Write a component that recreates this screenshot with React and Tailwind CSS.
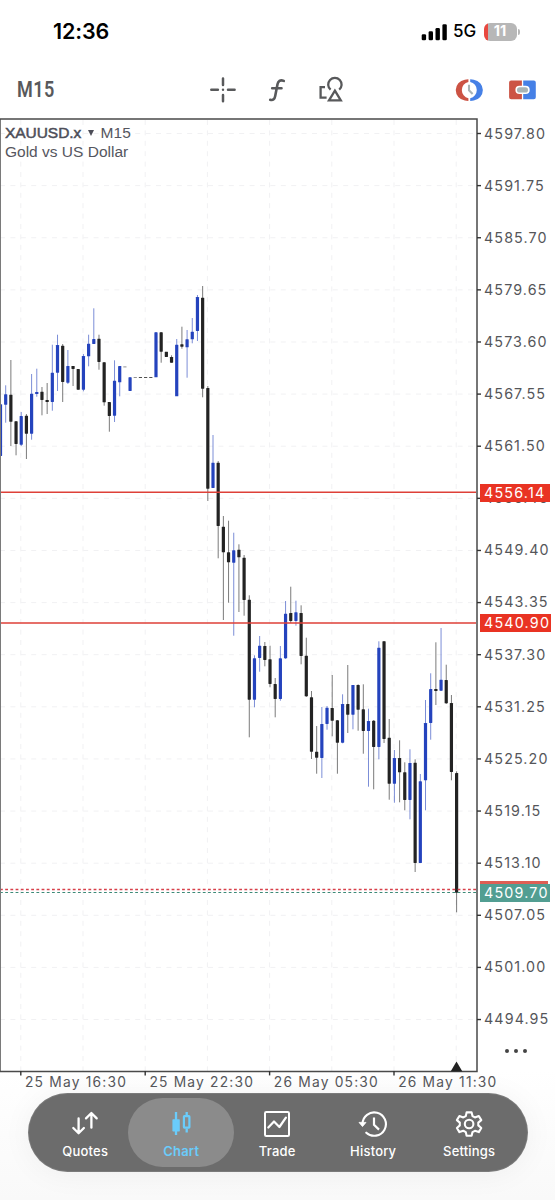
const prices = [
  "4597.80", "4591.75", "4585.70", "4579.65", "4573.60", "4567.55",
  "4561.50", "4555.45", "4549.40", "4543.35", "4537.30", "4531.25",
  "4525.20", "4519.15", "4513.10", "4507.05", "4501.00", "4494.95",
];

const times = ["25 May 16:30", "25 May 22:30", "26 May 05:30", "26 May 11:30"];

// [bullish, body top, body bottom, high, low]
const candles = [
  [1, 404.3, 456, 404, 456],
  [1, 394.3, 404.7, 385.3, 422.7],
  [0, 394.7, 421.7, 360, 446],
  [0, 421.3, 444, 421, 455.3],
  [1, 416, 444.7, 412, 446],
  [0, 415.7, 433.7, 414, 459],
  [1, 393.7, 433.7, 374, 439.7],
  [1, 392, 394, 368.7, 396.7],
  [0, 391.7, 400, 387, 415.3],
  [0, 400, 402, 383, 414],
  [1, 372.7, 402, 344.7, 410.7],
  [1, 345, 372.7, 334.7, 391],
  [0, 345.7, 382, 344, 402],
  [1, 366, 382.7, 350, 384],
  [0, 366, 369, 366, 386],
  [0, 369, 389.7, 369, 389.7],
  [1, 356, 389.7, 354, 391.3],
  [1, 343.7, 356.3, 334.7, 366.3],
  [1, 339, 344, 308.3, 344],
  [0, 338.7, 362, 334.7, 369.7],
  [0, 362.3, 402.3, 362, 405.7],
  [0, 402, 416, 402, 431.7],
  [1, 380.7, 415.7, 360.3, 422],
  [1, 366, 382.3, 366, 396.3],
  [0, 366.7, 367.2, 367, 367],
  [1, 377.3, 391, 377, 391],
  [0, 377.2, 377.7, 377, 377],
  [0, 377, 377.8, 377, 377],
  [0, 377, 377.8, 377, 377],
  [0, 377, 377.8, 377, 377],
  [1, 332.3, 377.3, 332, 377],
  [0, 332.3, 351.7, 332, 362.7],
  [0, 351.7, 357, 352, 357],
  [0, 357, 362.7, 355.3, 362.7],
  [1, 344.7, 396.3, 339, 396],
  [0, 344.3, 346.7, 326.7, 348.7],
  [1, 339.3, 347.3, 330, 377.7],
  [1, 331.7, 339.3, 318, 343.3],
  [1, 297, 331, 295, 341],
  [0, 297.7, 388.7, 286, 397.3],
  [0, 388, 488.7, 386, 501],
  [1, 462.7, 488, 435, 488],
  [0, 462.7, 526, 461, 558.3],
  [0, 526.7, 552.3, 516, 620],
  [0, 552.3, 562.3, 520.7, 602.7],
  [1, 550.3, 562.7, 532.7, 635.7],
  [0, 549.7, 557.3, 544.3, 612],
  [0, 557.7, 600, 555, 615.7],
  [0, 599.7, 699.7, 595.3, 737.3],
  [1, 658.3, 699.7, 655.3, 707.3],
  [1, 645.7, 658, 636, 671.7],
  [0, 646, 660, 642, 666.3],
  [0, 659.3, 684, 645.7, 687.3],
  [0, 684, 699, 678, 717.3],
  [1, 658.3, 699, 646, 700.7],
  [1, 613.7, 658.3, 601, 659],
  [0, 613, 621, 586.7, 623],
  [1, 612.3, 621, 600.7, 625.7],
  [0, 613, 656, 605.3, 664.3],
  [0, 655.7, 696.3, 637.7, 697],
  [0, 697.3, 751.7, 691, 759],
  [0, 751.7, 757.7, 726, 773.7],
  [1, 724, 758, 707, 778],
  [1, 707.7, 724, 706, 729.7],
  [0, 708, 720.7, 675, 736.3],
  [0, 720.3, 742.7, 720, 773.7],
  [1, 704, 742.7, 694.3, 743.3],
  [0, 704, 714.7, 665, 733],
  [1, 685, 714.7, 685, 729.3],
  [0, 685, 709.7, 684.3, 730.7],
  [0, 709.3, 731, 684.3, 753.7],
  [1, 721, 731, 708.7, 786.7],
  [0, 720.7, 747, 720, 789.3],
  [1, 647.7, 747, 641.3, 759.3],
  [0, 641.3, 739, 641, 743],
  [0, 737.7, 783.7, 719, 799.7],
  [1, 758, 783.7, 750, 802.7],
  [0, 758, 772.3, 740.3, 802.3],
  [0, 772.3, 800, 762.3, 810.3],
  [1, 763, 800, 749.3, 819.3],
  [0, 762.7, 863, 759.3, 872],
  [1, 781.3, 863, 774, 863],
  [1, 723, 780.3, 700, 810.3],
  [1, 689, 723, 673.3, 739.7],
  [0, 689, 691, 642.3, 705],
  [1, 679.7, 690.7, 628, 691],
  [0, 680, 703.3, 664.7, 704],
  [0, 703, 772, 695, 780.3],
  [0, 773, 892.7, 771.3, 912.3],
];

const candleX = (i) => 0.5 + i * 5.183;
const gridX = (i) => 20.8 + i * 62.2;
const gridY = (i) => 133.5 + i * 52.12;

function StatusBar() {
  return (
    <div className="flex h-[61px] items-center justify-between pl-[53px] pr-[36px] pt-[2px] text-black">
      <span className="text-[21.5px] font-semibold tracking-[-0.1px]">12:36</span>
      <div className="flex items-center">
        <svg width="27" height="18" viewBox="0 0 27 18">
          <rect x="0.7" y="11.3" width="4.4" height="6" rx="1.3" />
          <rect x="7.6" y="8.3" width="4.4" height="9" rx="1.3" />
          <rect x="14.5" y="5" width="4.4" height="12.3" rx="1.3" />
          <rect x="21.4" y="1.2" width="4.4" height="16.1" rx="1.3" />
        </svg>
        <span className="ml-[5px] w-[25px] text-[17px] font-medium leading-none">5G</span>
        <div className="ml-[6px] flex h-[18px] w-[33px] items-center justify-center overflow-hidden rounded-[6px] bg-[linear-gradient(90deg,#e8483f_4px,#b7b7b7_4px)]">
          <span className="pr-px text-[14.5px] font-bold leading-none text-white">11</span>
        </div>
        <div className="-mr-px ml-px h-[6px] w-[2px] rounded-r-full bg-[#b7b7b7]" />
      </div>
    </div>
  );
}

function Toolbar() {
  return (
    <div className="flex h-[57px] items-center pl-[17px] text-[#58595b]">
      <span className="w-[192px] origin-left scale-x-[0.82] font-['Roboto'] text-[22px] font-semibold leading-none tracking-[0.6px]">
        M15
      </span>
      <svg width="28" height="28" viewBox="209 75.5 28 28" fill="none" stroke="currentColor" strokeWidth="2.5" strokeLinecap="round">
        <path d="M211.300 89.300h6.600M228 89.300h6.600M223 78v6.600M223 94.600v6.200" />
        <circle cx="223" cy="89.3" r="1.2" fill="currentColor" stroke="none" />
      </svg>
      <svg className="ml-[30px]" width="20" height="28" viewBox="267 75.5 20 28" fill="none" stroke="currentColor" strokeWidth="2.6" strokeLinecap="round" strokeLinejoin="round">
        <path d="M283.8 80.4c-3.7-1.5-5.7.3-6.3 3.4l-2.3 11.6c-.6 3.1-2 4.8-5 3.9M272.2 87.7h9.3" />
      </svg>
      <svg className="ml-[30px]" width="28" height="28" viewBox="317 75.5 28 28" fill="none" stroke="currentColor" strokeWidth="2.3">
        <path d="M325 86.6h-4.4v10.6h6" />
        <path d="M330.6 89.2a6.7 6.7 0 1 1 8.6 0" />
        <path d="M334.9 90.2l5.9 9.700h-11.800z" />
      </svg>
      <svg className="ml-[110px]" width="28" height="28" viewBox="455 75.5 28 28">
        <path d="M468.4 78.8a14 14 0 0 0-3.6.4a10.5 10.5 0 0 0 0 20.8a14 14 0 0 0 3.6.4v-2.6a8.4 8.4 0 0 1 0-16.4z" fill="#cc5344" />
        <path d="M470.2 78.8a14 14 0 0 1 3.6.4a10.5 10.5 0 0 1 0 20.8a14 14 0 0 1-3.6.4v-2.600a8.400 8.400 0 0 0 0-16.400z" fill="#4680e6" />
        <path d="M469 84.3v5.5l3.600 3.600" fill="none" stroke="#a9b4b6" strokeWidth="2.1" />
      </svg>
      <svg className="ml-[25px]" width="28" height="28" viewBox="508 75.5 28 28">
        <path d="M521.9 80h-10.8a2 2 0 0 0-2 2v14.800a2 2 0 0 0 2 2h10.800v-5.300h-2.400a4 4 0 0 1 0-8.200h2.400z" fill="#cc5344" />
        <path d="M523.200 80h10.600a2 2 0 0 1 2 2v14.800a2 2 0 0 1-2 2h-10.600v-5.300h2.400a4 4 0 0 0 0-8.200h-2.400z" fill="#4680e6" />
        <rect x="517" y="86.700" width="11" height="5.400" rx="2.700" fill="#a9b4b6" />
      </svg>
    </div>
  );
}

function CandleChart() {
  return (
    <svg className="block" width="482" height="958" viewBox="0 118 482 958">
      <g stroke="#f1f1f3" strokeWidth="1" strokeDasharray="5 5.4">
        {prices.map((p, i) => (
          <line key={p} x1="0" x2="476" y1={gridY(i)} y2={gridY(i)} />
        ))}
        {Array.from({ length: 8 }, (_, i) => (
          <line key={i} x1={gridX(i)} x2={gridX(i)} y1="120" y2="1071" />
        ))}
      </g>

      {candles.map(([up, top, bottom, high, low], i) => (
        <g key={i} fill={up ? "#2443bd" : "#232323"}>
          <rect x={candleX(i) - 0.5} y={high} width="1" height={low - high} opacity="0.6" />
          <rect
            x={candleX(i) - 1.6}
            y={top}
            width="3.2"
            height={bottom - top}
            rx={bottom - top > 2 ? 0.4 : 0}
          />
        </g>
      ))}

      <path d="M0 492.3H476M0 623H476" stroke="#de4038" strokeWidth="1.5" />
      <path d="M0 889.5H476" stroke="#d8404a" strokeWidth="1.3" strokeDasharray="2.8 2.4" />
      <path d="M0 892.5H476" stroke="#3d8a78" strokeWidth="1.2" strokeDasharray="2.8 2.4" />

      <path d="M0.5 119V1071.5" stroke="#7a7a7a" strokeWidth="1" />
      <path d="M0 119H477V1071.5H0" fill="none" stroke="#4a4a4a" strokeWidth="1.5" />
      {prices.map((p, i) => (
        <line key={p} x1="477" x2="481" y1={gridY(i)} y2={gridY(i)} stroke="#333" strokeWidth="1.4" />
      ))}
      {times.map((t, i) => (
        <line key={t} x1={gridX(i * 2)} x2={gridX(i * 2)} y1="1071" y2="1075.4" stroke="#333" strokeWidth="1.4" />
      ))}
      <path d="M456.5 1061.5L462.4 1071.5H450.6Z" fill="#222" />
    </svg>
  );
}

function PriceTag({ className, children }) {
  return (
    <div
      className={`absolute left-[480px] flex h-[18px] items-center pl-[4px] text-[14.3px] tracking-[1.2px] text-white ${className}`}
    >
      {children}
    </div>
  );
}

function Chart() {
  return (
    <div className="relative flex h-[958px]">
      <CandleChart />
      <div className="mt-[6.5px] flex h-[904px] flex-col justify-between pl-[2px] text-[14.3px] tracking-[1.1px] text-[#55565a]">
        {prices.map((p) => (
          <span key={p} className="h-[18px] leading-[18px]">
            {p}
          </span>
        ))}
      </div>

      <div className="absolute left-[5px] top-[4.5px] font-['Liberation_Sans'] text-[15.5px] leading-[19px] text-[#55565e]">
        <div className="flex items-center">
          <span className="w-[76px] tracking-[-0.05px] text-[#4d4e58] [-webkit-text-stroke:0.5px_#4d4e58]">XAUUSD.x</span>
          <svg className="ml-[7px] mr-[6.5px]" width="6" height="7" viewBox="0 0 6 7">
            <path d="M0 1h6L3 7z" fill="#4d4e58" />
          </svg>
          <span className="tracking-[0.15px]">M15</span>
        </div>
        <div>Gold vs US Dollar</div>
      </div>

      <PriceTag className="top-[365.5px] w-[70px] bg-[#e93323]">4556.14</PriceTag>
      <PriceTag className="top-[496px] w-[71px] bg-[#e93323]">4540.90</PriceTag>
      <div className="absolute left-[480px] top-[762.5px] h-[10px] w-[68px] bg-[#df5f55]" />
      <PriceTag className="top-[765.5px] w-[70px] bg-[#529e92]">4509.70</PriceTag>

      <div className="absolute left-[505px] top-[931px] flex gap-[5px]">
        <i className="size-[4px] rounded-full bg-[#444]" />
        <i className="size-[4px] rounded-full bg-[#444]" />
        <i className="size-[4px] rounded-full bg-[#444]" />
      </div>
    </div>
  );
}

function QuotesIcon() {
  return (
    <path d="M8.6 8.5v14.6M3.3 18l5.3 5.3 5.3-5.3M21.4 17.7V3.2M16 8.4l5.4-5.4 5.3 5.4" strokeWidth="2.3" strokeLinecap="round" strokeLinejoin="round" />
  );
}

function ChartIcon() {
  return (
    <>
      <path d="M10 2v23M20.7 2v4M20.7 18.5v4" strokeWidth="2.3" />
      <rect x="6.4" y="9.3" width="7.4" height="12.2" rx="0.8" fill="currentColor" stroke="none" />
      <rect x="17.9" y="6.2" width="5.5" height="11.4" rx="0.5" strokeWidth="2.2" />
    </>
  );
}

function TradeIcon() {
  return (
    <>
      <rect x="3" y="2" width="24" height="24" rx="1.3" strokeWidth="2" />
      <path d="M6.3 17.5l5.7-6 5.4 5.5 6.5-9.4" strokeWidth="2.2" strokeLinejoin="round" strokeLinecap="round" />
    </>
  );
}

function HistoryIcon() {
  return (
    <>
      <path d="M4.5 14A11.7 11.7 0 1 1 8.3 22.7" strokeWidth="2.1" strokeLinecap="round" />
      <path d="M1 12.4h7L4.5 16.6z" fill="currentColor" strokeWidth="0.8" strokeLinejoin="round" />
      <path d="M16 7.4v7.4l5 4.8" strokeWidth="2.2" />
    </>
  );
}

function SettingsIcon() {
  return (
    <>
      <path
        d="M12.6 2.4h5l.9 3.7 2.4 1.3 3.9-1.4 2.5 4.1-3 2.5v2.8l3 2.6-2.5 4.1-3.9-1.3-2.4 1.3-.9 3.7h-5l-.8-3.7-2.5-1.3L5.4 22.1l-2.5-4.1 2.9-2.6v-2.8l-2.9-2.5 2.5-4.1 3.9 1.4 2.5-1.3z"
        strokeWidth="2.1"
        strokeLinejoin="round"
      />
      <circle cx="15.1" cy="14" r="4.3" strokeWidth="2.1" />
    </>
  );
}

const tabs = [
  { label: "Quotes", icon: QuotesIcon },
  { label: "Chart", icon: ChartIcon, active: true },
  { label: "Trade", icon: TradeIcon },
  { label: "History", icon: HistoryIcon },
  { label: "Settings", icon: SettingsIcon },
];

function TabBar() {
  return (
    <nav className="mx-[27.5px] flex h-[79px] items-center rounded-full bg-[#6c6c6c] px-[9.7px] shadow-[0_2px_30px_rgba(0,0,0,0.05),inset_0_0_0_1px_rgba(255,255,255,0.1)]">
      {tabs.map(({ label, icon: Icon, active }) => (
        <div
          key={label}
          className={`-mx-[5px] flex h-[69px] w-[106px] shrink-0 flex-col items-center rounded-full pt-[12px] ${
            active ? "bg-[#8b8b8b] text-[#6accfb]" : "text-white"
          }`}
        >
          <svg width="30" height="28" viewBox="0 0 30 28" fill="none" stroke="currentColor">
            <Icon />
          </svg>
          <span className={`mt-[3.5px] text-[13px] leading-[18px] tracking-[0.2px] ${active ? "font-semibold" : "font-medium"}`}>
            {label}
          </span>
        </div>
      ))}
    </nav>
  );
}

function App() {
  return (
    <div className="h-[1200px] w-[555px] overflow-hidden bg-[linear-gradient(#fff_1070px,#f9f9f9_1200px)] font-['Inter',sans-serif]">
      <StatusBar />
      <Toolbar />
      <Chart />
      <div className="flex h-[17px] pl-[25px] text-[13.8px] leading-[13px] tracking-[1.2px] text-[#55565a]">
        {times.map((t) => (
          <span key={t} className="w-[124.4px] shrink-0 whitespace-nowrap">
            {t}
          </span>
        ))}
      </div>
      <TabBar />
    </div>
  );
}

export default App;
